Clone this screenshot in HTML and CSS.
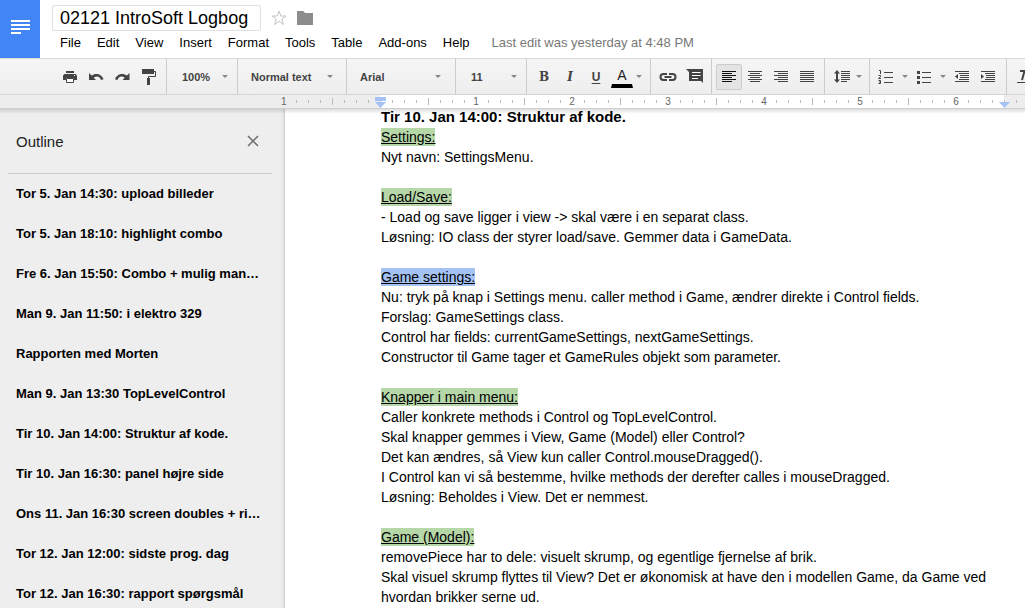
FILE: index.html
```html
<!DOCTYPE html>
<html lang="en">
<head>
<meta charset="utf-8">
<title>02121 IntroSoft Logbog</title>
<link rel="stylesheet" href="styles.css">
</head>
<body>
<header class="header">
  <a class="home" href="#" aria-label="Docs home">
    <svg width="20" height="14" viewBox="0 0 20 14" fill="#fff"><path d="M1 0h19v2H1zM1 4h19v2H1zM1 8h19v2H1zM1 12h10v2H1z"/></svg>
  </a>
  <div class="heading">
    <div class="title-row">
      <input class="title" type="text" value="02121 IntroSoft Logbog" aria-label="Document title">
      <button class="plain" aria-label="Star"><svg width="16" height="16" viewBox="0 0 16 16" fill="none" stroke="#c4c4c4"><path d="M8 1l1.800 5h5.200l-4.200 3.200 1.600 5.300L8 11.400l-4.400 3.100 1.600-5.300L1 6h5.200z"/></svg></button>
      <button class="plain" aria-label="Move to folder"><svg width="16" height="14" viewBox="0 0 16 14" fill="#8c8c8c"><path d="M0 0h6.500L8 2h8v12H0z"/></svg></button>
    </div>
    <nav class="menus">
      <button class="menu">File</button><button class="menu">Edit</button><button class="menu">View</button><button class="menu">Insert</button><button class="menu">Format</button><button class="menu">Tools</button><button class="menu">Table</button><button class="menu">Add-ons</button><button class="menu">Help</button>
      <a class="edited" href="#">Last edit was yesterday at 4:48 PM</a>
    </nav>
  </div>
</header>

<div class="toolbar" role="toolbar" aria-label="Formatting">
  <div class="group first">
    <button class="tool" aria-label="Print"><svg width="16" height="16" viewBox="0 0 16 16"><path d="M4 2h8v2H4zM2.500 5h11L15 6.500V11h-3V9H4v2H1V6.500z"/><path d="M4.500 9.500h7v4h-7z" fill="#fff" stroke="#444"/><path d="M12 6h1v1h-1z" fill="#fff"/></svg></button>
    <button class="tool" aria-label="Undo"><svg width="16" height="16" viewBox="0 0 16 16"><path d="M1 4v7h7L5.700 8.700C9 6.500 12 7.500 13 11l2.500-.8C14 5.500 8 3.200 3.600 6.600z"/></svg></button>
    <button class="tool" aria-label="Redo"><svg width="16" height="16" viewBox="0 0 16 16"><path d="M15.500 4v7h-7l2.300-2.300C7.500 6.500 4.500 7.500 3.500 11L1 10.200C2.500 5.500 8.500 3.200 12.900 6.600z"/></svg></button>
    <button class="tool" aria-label="Paint format"><svg width="16" height="18" viewBox="0 0 16 18"><path d="M2 1h12v5H2zM7 10h3v7H7z"/><path d="M14 3.500h1.500v5h-7V11" fill="none" stroke="#444"/></svg></button>
  </div>
  <div class="group pick zoom"><select aria-label="Zoom"><option>100%</option></select></div>
  <div class="group pick style"><select aria-label="Style"><option>Normal text</option></select></div>
  <div class="group pick font"><select aria-label="Font"><option>Arial</option></select></div>
  <div class="group pick size"><select aria-label="Font size"><option>11</option></select></div>
  <div class="group text">
    <button class="tool serif bold">B</button>
    <button class="tool serif italic">I</button>
    <button class="tool under">U</button>
    <button class="tool color" aria-label="Text color">A</button>
    <span class="caret"></span>
  </div>
  <div class="group insert">
    <button class="tool" aria-label="Insert link"><svg width="18" height="10" viewBox="0 0 18 10" fill="none" stroke="#444" stroke-width="2"><path d="M8 2H4.500a3 3 0 0 0 0 6H8M10 2h3.500a3 3 0 0 1 0 6H10M5.500 5h7"/></svg></button>
    <button class="tool" aria-label="Insert comment"><svg width="18" height="16" viewBox="0 0 18 16"><path d="M1 0h17v14l-2-2H4V3z"/><path d="M7 3.500h8.500M7 6.500h8.500M7 9.500h6" stroke="#fff"/></svg></button>
  </div>
  <div class="group align">
    <button class="tool active" aria-label="Left align" aria-pressed="true"><svg width="14" height="12" viewBox="0 0 14 12" stroke="#111"><path d="M0 .5h14M0 2.500h10M0 4.500h14M0 6.500h10M0 8.500h14M0 10.500h10"/></svg></button>
    <button class="tool" aria-label="Center align"><svg width="14" height="12" viewBox="0 0 14 12" stroke="#444"><path d="M0 .5h14M2 2.500h10M0 4.500h14M2 6.500h10M0 8.500h14M2 10.500h10"/></svg></button>
    <button class="tool" aria-label="Right align"><svg width="14" height="12" viewBox="0 0 14 12" stroke="#444"><path d="M0 .5h14M4 2.500h10M0 4.500h14M4 6.500h10M0 8.500h14M4 10.500h10"/></svg></button>
    <button class="tool" aria-label="Justify"><svg width="14" height="12" viewBox="0 0 14 12" stroke="#444"><path d="M0 .5h14M0 2.500h14M0 4.500h14M0 6.500h14M0 8.500h14M0 10.500h14"/></svg></button>
  </div>
  <div class="group spacing">
    <button class="tool" aria-label="Line spacing"><svg width="16" height="14" viewBox="0 0 16 14"><path d="M3 0l3 3.500H4v6h2L3 13 0 9.500h2v-6H0z"/><path d="M7 1.500h9M7 3.500h9M7 5.500h9M7 7.500h9M7 9.500h9M7 11.500h6" stroke="#444"/></svg></button>
    <span class="caret"></span>
  </div>
  <div class="group lists">
    <button class="tool" aria-label="Numbered list"><svg width="16" height="14" viewBox="0 0 16 14" fill="none" stroke="#444"><path d="M6 2.500h9M6 7.500h9M6 12.500h9M1 .5h1.500V4M.5 5.500h2v1.300L.5 8.500h2.500M.5 10.500h2v3h-2M1 12h1.500"/></svg></button>
    <span class="caret"></span>
    <button class="tool" aria-label="Bulleted list"><svg width="16" height="14" viewBox="0 0 16 14"><path d="M1 1h3v3H1zM1 6h3v3H1zM1 11h3v3H1z"/><path d="M6 2.500h9M6 7.500h9M6 12.500h9" stroke="#444"/></svg></button>
    <span class="caret"></span>
    <button class="tool" aria-label="Decrease indent"><svg width="14" height="12" viewBox="0 0 14 12"><path d="M3 3v5L0 5.500z"/><path d="M0 .5h14M4 2.500h10M5 4.500h9M5 6.500h9M4 8.500h10M0 10.500h14" stroke="#444"/></svg></button>
    <button class="tool" aria-label="Increase indent"><svg width="14" height="12" viewBox="0 0 14 12"><path d="M0 3v5l3-2.500z"/><path d="M0 .5h14M4 2.500h10M5 4.500h9M5 6.500h9M4 8.500h10M0 10.500h14" stroke="#444"/></svg></button>
  </div>
  <div class="group clear">
    <button class="tool" aria-label="Clear formatting"><svg width="16" height="14" viewBox="0 0 16 14" fill="none" stroke="#444"><path d="M3 1h11M7.500 1L5 10" stroke-width="2"/><path d="M0 12.500h14"/></svg></button>
  </div>
</div>

<div class="ruler">
  <div class="ruler-left"><span class="mark">1</span></div>
  <div class="ruler-body">
    <svg class="indent start" width="12" height="11" viewBox="0 0 12 11" fill="#a4c2f4"><path d="M0 0h11v4H0zM0 5h11l-5.500 6z"/></svg>
    <span class="mark">1</span><span class="mark">2</span><span class="mark">3</span><span class="mark">4</span><span class="mark">5</span><span class="mark">6</span>
    <svg class="indent end" width="12" height="6" viewBox="0 0 12 6" fill="#a4c2f4"><path d="M0 0h11L5.500 6z"/></svg>
  </div>
  <div class="ruler-right"></div>
</div>

<div class="workspace">
  <aside class="outline">
    <div class="outline-head"><h2>Outline</h2><button class="plain" aria-label="Close outline"><svg width="12" height="12" viewBox="0 0 12 12" stroke="#6b6b6b" stroke-width="1.500"><path d="M1 1l10 10M11 1L1 11"/></svg></button></div>
    <nav class="entries">
      <a href="#">Tor 5. Jan 14:30: upload billeder</a>
      <a href="#">Tor 5. Jan 18:10: highlight combo</a>
      <a href="#">Fre 6. Jan 15:50: Combo + mulig man…</a>
      <a href="#">Man 9. Jan 11:50: i elektro 329</a>
      <a href="#">Rapporten med Morten</a>
      <a href="#">Man 9. Jan 13:30 TopLevelControl</a>
      <a href="#">Tir 10. Jan 14:00: Struktur af kode.</a>
      <a href="#">Tir 10. Jan 16:30: panel højre side</a>
      <a href="#">Ons 11. Jan 16:30 screen doubles + ri…</a>
      <a href="#">Tor 12. Jan 12:00: sidste prog. dag</a>
      <a href="#">Tor 12. Jan 16:30: rapport spørgsmål</a>
    </nav>
  </aside>
  <main class="page">
    <article class="copy">
      <h1>Tir 10. Jan 14:00: Struktur af kode.</h1>
      <section>
        <h2><mark>Settings:</mark></h2>
        <p>Nyt navn: SettingsMenu.</p>
      </section>
      <section>
        <h2><mark>Load/Save:</mark></h2>
        <p>- Load og save ligger i view -&gt; skal være i en separat class.</p>
        <p>Løsning: IO class der styrer load/save. Gemmer data i GameData.</p>
      </section>
      <section>
        <h2><mark class="selected">Game settings:</mark></h2>
        <p>Nu: tryk på knap i Settings menu. caller method i Game, ændrer direkte i Control fields.</p>
        <p>Forslag: GameSettings class.</p>
        <p>Control har fields: currentGameSettings, nextGameSettings.</p>
        <p>Constructor til Game tager et GameRules objekt som parameter.</p>
      </section>
      <section>
        <h2><mark>Knapper i main menu:</mark></h2>
        <p>Caller konkrete methods i Control og TopLevelControl.</p>
        <p>Skal knapper gemmes i View, Game (Model) eller Control?</p>
        <p>Det kan ændres, så View kun caller Control.mouseDragged().</p>
        <p>I Control kan vi så bestemme, hvilke methods der derefter calles i mouseDragged.</p>
        <p>Løsning: Beholdes i View. Det er nemmest.</p>
      </section>
      <section>
        <h2><mark>Game (Model):</mark></h2>
        <p>removePiece har to dele: visuelt skrump, og egentlige fjernelse af brik.</p>
        <p>Skal visuel skrump flyttes til View? Det er økonomisk at have den i modellen Game, da Game ved hvordan brikker serne ud.</p>
      </section>
    </article>
  </main>
</div>
</body>
</html>
```
FILE: styles.css
```css
* { box-sizing: border-box; }
body {
  margin: 0;
  height: 100vh;
  overflow: hidden;
  display: flex;
  flex-direction: column;
  background: #fff;
  color: #000;
  font-family: "Liberation Sans", Arial, sans-serif;
  font-size: 13px;
}
button, input, select { font: inherit; color: inherit; }
button { border: 0; padding: 0; background: none; }
svg { display: block; flex: none; }
h1, h2, p { margin: 0; font-size: inherit; font-weight: normal; }
a { color: inherit; text-decoration: none; }

.header { display: flex; flex: none; height: 59px; border-bottom: 1px solid #d9d9d9; }
.home { display: flex; align-items: center; justify-content: center; width: 40px; padding-bottom: 4px; background: #4285f4; }
.heading { flex: 1; padding: 5px 0 0 12px; }
.title-row { display: flex; align-items: center; gap: 10px; }
.title { width: 209px; height: 26px; padding: 0 7px; border: 1px solid #e0e0e0; border-radius: 2px; font-size: 18px; background: #fff; }
.plain { display: flex; }
.menus { display: flex; align-items: center; height: 22px; padding-left: 1px; white-space: nowrap; }
.menu { padding: 0 8px; }
.menu:first-child { padding-left: 7px; }
.edited { margin-left: 14px; color: #777; }

.toolbar {
  display: flex;
  flex: none;
  height: 36px;
  overflow: hidden;
  border-bottom: 1px solid #d4d4d4;
  background: linear-gradient(#f5f5f5, #eee);
  color: #444;
}
.group { display: flex; flex: none; align-items: center; border-left: 1px solid #ccc; }
.group.first { width: 166px; padding-left: 57px; border-left: 0; }
.tool { display: flex; flex: none; align-items: center; justify-content: center; width: 26px; height: 26px; border: 1px solid transparent; border-radius: 2px; }
.tool svg { fill: #444; }
.tool svg[fill="none"] { fill: none; }
.tool.active { border-color: #ccc; background: #e4e4e4; }
.caret, .pick::after {
  content: "";
  flex: none;
  width: 6px;
  height: 3px;
  background: #888;
  clip-path: polygon(0 0, 100% 0, 50% 100%);
}
.pick { padding: 0 9px 0 14px; font-size: 11px; font-weight: bold; }
.pick select { flex: 1; min-width: 0; height: 26px; padding: 0; border: 0; background: none; appearance: none; }
.zoom { width: 71px; padding-left: 15px; }
.style { width: 109px; padding-left: 13px; padding-right: 13px; }
.font { width: 109px; padding-left: 13px; padding-right: 14px; }
.size { width: 71px; padding-left: 15px; }
.text { width: 124px; padding-left: 4px; }
.serif { font-family: "DejaVu Serif", serif; font-size: 12px; font-weight: bold; }
.italic { font-style: italic; }
.under { font-size: 12px; font-weight: bold; text-decoration: underline; text-underline-offset: 2px; }
.color { width: 22px; margin-left: 2px; border-radius: 0; border-bottom: 4px solid #000; height: 23px; font-size: 14px; color: #222; }
.text .caret { margin-left: 3px; }
.insert { width: 61px; padding-left: 4px; }
.align { width: 113px; padding-left: 4px; }
.spacing { width: 45px; padding-left: 4px; }
.spacing .caret { margin-left: 1px; }
.lists { width: 137px; padding-left: 3px; }
.lists .caret { margin: 0 3px; }
.clear { flex: 1 0 auto; padding-left: 5px; }

.ruler { display: flex; flex: none; height: 14px; border-bottom: 1px solid #d0d0d0; background: #ededed; color: #666; font-size: 10px; line-height: 13px; }
.ruler-left {
  flex: none;
  width: 99px;
  margin-left: 281px;
  background-image: linear-gradient(#bbb, #bbb), repeating-linear-gradient(90deg, #bbb 0 1px, transparent 1px 12px);
  background-position: 51px 3px, 3px 5px;
  background-size: 1px 7px, 96px 3px;
  background-repeat: no-repeat;
}
.ruler-left .mark { display: block; width: 8px; background: #ededed; }
.ruler-body {
  position: relative;
  display: flex;
  flex: none;
  width: 624px;
  padding-left: 48px;
  background-color: #fff;
  background-position: 48px 3px, 0 5px;
  background-size: 96px 7px, 96px 3px;
  background-image: linear-gradient(90deg, #bbb 1px, transparent 1px), repeating-linear-gradient(90deg, #bbb 0 1px, transparent 1px 12px);
  background-repeat: repeat-x;
}
.ruler-body .mark { display: flex; justify-content: center; width: 96px; background: linear-gradient(#fff, #fff) center / 8px 100% no-repeat; }
.ruler-right { flex: 1; background-image: repeating-linear-gradient(90deg, #bbb 0 1px, transparent 1px 12px); background-size: 96px 3px; background-position: 0 5px; background-repeat: repeat-x; }
.indent { position: absolute; z-index: 2; bottom: 0; }
.indent.start { left: -5px; }
.indent.end { right: -7px; }

.workspace { position: relative; display: flex; flex: 1; min-height: 0; }
.workspace::before { content: ""; position: absolute; z-index: 1; top: 0; left: 0; right: 0; height: 5px; background: linear-gradient(rgba(0, 0, 0, .13), transparent); }
.outline { flex: none; width: 285px; border-right: 1px solid #d0d0d0; background: linear-gradient(90deg, transparent 280px, #e2e2e2) #eee; overflow: hidden; }
.outline-head { display: flex; align-items: center; justify-content: space-between; height: 65px; margin: 0 12px 0 8px; padding: 0 13px 0 8px; border-bottom: 1px solid #ccc; color: #222; font-size: 15px; }
.entries { display: flex; flex-direction: column; padding: 0 20px 0 16px; font-weight: bold; line-height: 40px; }
.entries a { flex: none; white-space: nowrap; }
.page { flex: 1; min-width: 0; padding-left: 96px; overflow: hidden; }
.copy { max-width: 628px; margin-top: -2px; font-size: 14px; line-height: 20px; }
.copy h1 { font-size: 15px; font-weight: bold; }
.copy section + section { margin-top: 20px; }
.copy mark { padding: 1px 0; background: #b6d7a8; color: inherit; text-decoration: underline; }
.copy mark.selected { background: #a4c2f4; }
```
